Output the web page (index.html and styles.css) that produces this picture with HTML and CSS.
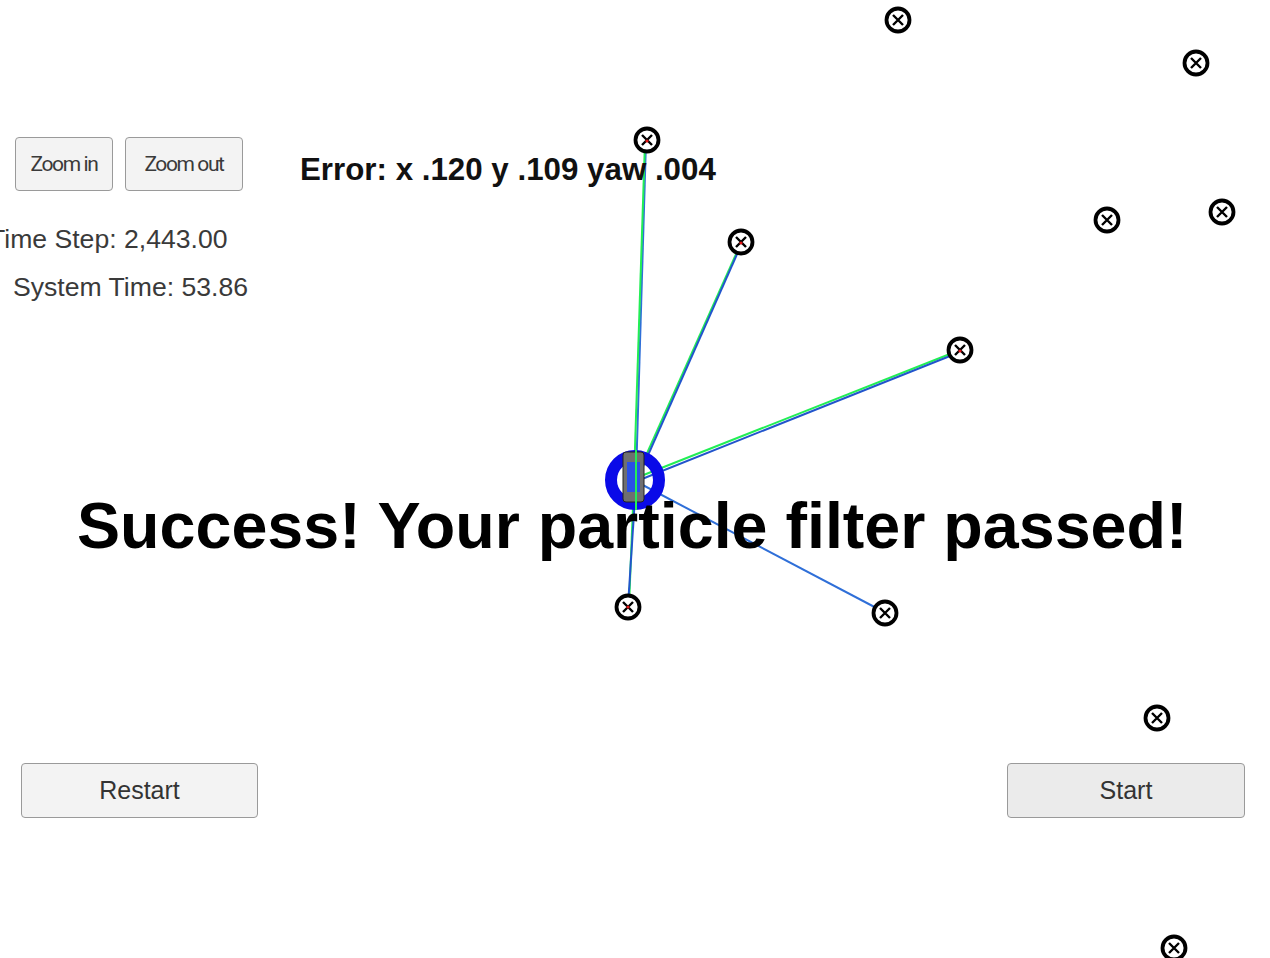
FILE: index.html
```html
<!DOCTYPE html>
<html>
<head>
<meta charset="utf-8">
<title>Particle Filter Simulator</title>
<link rel="stylesheet" href="styles.css">
</head>
<body>
<div class="app">
  <svg class="map" width="1270" height="958" viewBox="0 0 1270 958" xmlns="http://www.w3.org/2000/svg">
    <defs>
      <g id="lm">
        <circle cx="0" cy="0" r="11.5" fill="#fff" stroke="#000" stroke-width="3.8"/>
        <path d="M-5 -5 L5 5 M5 -5 L-5 5" stroke="#000" stroke-width="2.4"/>
      </g>
    </defs>
    <!-- observation lines -->
    <g stroke-width="2" fill="none">
      <line x1="636" y1="478" x2="646" y2="141" stroke="#2f6fd8"/>
      <line x1="634" y1="478" x2="645" y2="141" stroke="#22ee55"/>
      <line x1="636" y1="478" x2="741" y2="243" stroke="#22ee55"/>
      <line x1="637" y1="480" x2="742" y2="243" stroke="#2255cc"/>
      <line x1="636" y1="478" x2="960" y2="350" stroke="#22ee55"/>
      <line x1="637" y1="481" x2="960" y2="352" stroke="#2255cc"/>
      <line x1="634" y1="482" x2="629" y2="606" stroke="#22ee55"/>
      <line x1="636" y1="482" x2="628" y2="606" stroke="#2255cc"/>
      <line x1="637" y1="482" x2="884" y2="612" stroke="#2f6fd8"/>
    </g>
    <!-- vehicle -->
    <g>
      <circle cx="635" cy="480" r="24" fill="none" stroke="#0a0ae8" stroke-width="12"/>
      <rect x="623" y="452" width="21" height="50" rx="3" fill="#6f6f70" stroke="#222" stroke-width="1"/>
      <rect x="627" y="462" width="13" height="30" fill="#2a4fe6"/>
      <line x1="636" y1="450" x2="636" y2="510" stroke="#22ee55" stroke-width="2"/>
    </g>
    <!-- landmarks -->
    <use href="#lm" x="898" y="20"/>
    <use href="#lm" x="1196" y="63"/>
    <use href="#lm" x="647" y="140"/>
    <use href="#lm" x="741" y="242"/>
    <use href="#lm" x="1107" y="220"/>
    <use href="#lm" x="1222" y="212"/>
    <use href="#lm" x="960" y="350"/>
    <use href="#lm" x="628" y="607"/>
    <use href="#lm" x="885" y="613"/>
    <use href="#lm" x="1157" y="718"/>
    <use href="#lm" x="1174" y="948"/>
    <g fill="#e01010">
      <circle cx="647" cy="141" r="1.6"/>
      <circle cx="741" cy="243" r="1.6"/>
      <circle cx="960" cy="351" r="1.6"/>
      <circle cx="628" cy="607" r="1.6"/>
    </g>
  </svg>

  <div class="ui">
    <div class="top">
      <div class="controls">
        <div class="zoom-row">
          <button class="btn zoom zoom-in">Zoom in</button>
          <button class="btn zoom zoom-out">Zoom out</button>
        </div>
        <div class="label time-step">Time Step: 2,443.00</div>
        <div class="label system-time">System Time: 53.86</div>
      </div>
      <div class="error">Error: x .120 y .109 yaw .004</div>
    </div>
    <div class="success">Success! Your particle filter passed!</div>
    <div class="bottom">
      <button class="btn big restart">Restart</button>
      <button class="btn big start">Start</button>
    </div>
  </div>
</div>
</body>
</html>
```

FILE: styles.css
```css
html, body {
  margin: 0;
  padding: 0;
  background: #fff;
  overflow: hidden;
}
.app {
  position: relative;
  width: 1270px;
  height: 958px;
  font-family: "Liberation Sans", Arial, sans-serif;
}
.map {
  position: absolute;
  left: 0;
  top: 0;
}
.ui {
  position: relative;
  display: flex;
  flex-direction: column;
  height: 958px;
  box-sizing: border-box;
  padding-top: 137px;
  pointer-events: none;
}
.top {
  display: flex;
  align-items: flex-start;
}
.controls {
  display: flex;
  flex-direction: column;
  width: 300px;
}
.zoom-row {
  display: flex;
  gap: 12px;
  padding-left: 15px;
}
.btn {
  box-sizing: border-box;
  border: 1px solid #9a9a9a;
  border-radius: 4px;
  background: #f3f3f3;
  color: #333;
  padding: 0;
  font-family: "Liberation Sans", Arial, sans-serif;
}
.zoom {
  height: 54px;
  font-family: "Roboto", "Liberation Sans", sans-serif;
  font-size: 21px;
  letter-spacing: -1.4px;
  color: #3a3a3a;
}
.zoom-in { width: 98px; }
.zoom-out { width: 118px; }
.label {
  font-size: 26.6px;
  color: #3a3a3a;
  white-space: nowrap;
  line-height: 30px;
}
.time-step {
  margin-top: 33px;
  margin-left: -11px;
}
.system-time {
  margin-top: 18px;
  margin-left: 13px;
}
.error {
  font-weight: bold;
  font-size: 31.3px;
  color: #111;
  margin-top: 15px;
  white-space: nowrap;
}
.success {
  margin-top: 187px;
  padding-left: 77px;
  font-weight: bold;
  font-size: 64.6px;
  line-height: 74px;
  color: #000;
  white-space: nowrap;
}
.bottom {
  display: flex;
  justify-content: space-between;
  padding: 0 25px 0 21px;
  margin-top: 200px;
}
.big {
  width: 237px;
  height: 55px;
  font-size: 25px;
}
.start {
  background: #ebebeb;
  width: 238px;
}
```
